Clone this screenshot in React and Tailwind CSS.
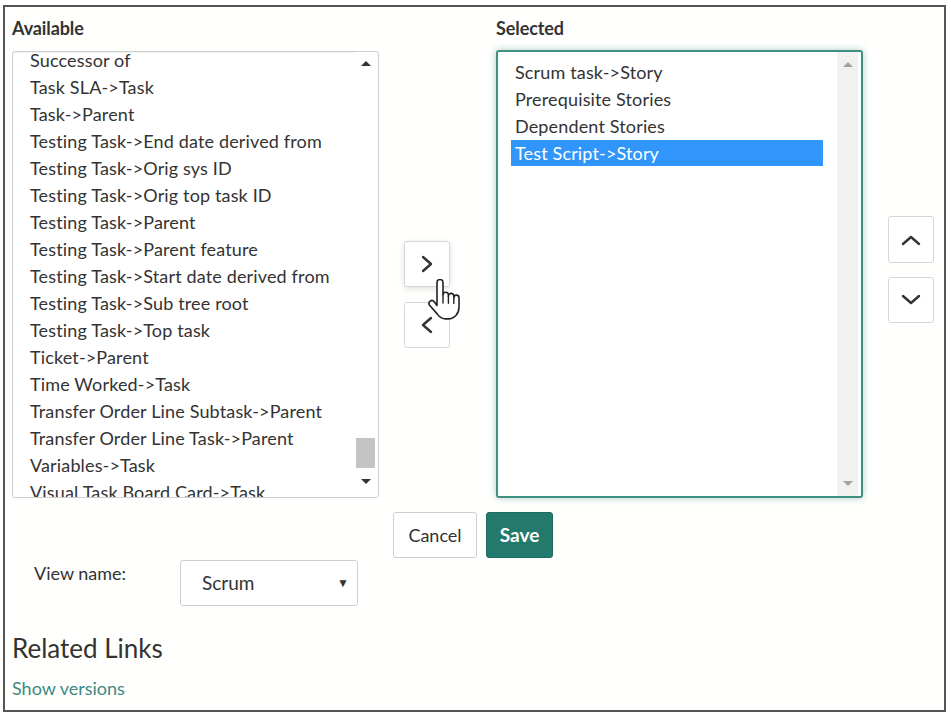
import React from 'react';

const available = [
  'Successor of',
  'Task SLA->Task',
  'Task->Parent',
  'Testing Task->End date derived from',
  'Testing Task->Orig sys ID',
  'Testing Task->Orig top task ID',
  'Testing Task->Parent',
  'Testing Task->Parent feature',
  'Testing Task->Start date derived from',
  'Testing Task->Sub tree root',
  'Testing Task->Top task',
  'Ticket->Parent',
  'Time Worked->Task',
  'Transfer Order Line Subtask->Parent',
  'Transfer Order Line Task->Parent',
  'Variables->Task',
  'Visual Task Board Card->Task',
];

const selected = ['Scrum task->Story', 'Prerequisite Stories', 'Dependent Stories', 'Test Script->Story'];

function HandCursor() {
  return (
    <svg className="absolute left-[423px] top-[272px]" width="36" height="42" viewBox="0 0 36 42">
      <path
        d="M9 3.5c0-1.7 1.3-3 3-3s3 1.3 3 3v12.5c0-1.6 1.2-2.8 2.7-2.8s2.7 1.2 2.7 2.8v1.2c0-1.6 1.2-2.8 2.7-2.8s2.7 1.2 2.7 2.8v1.5c0-1.5 1.2-2.6 2.6-2.6s2.6 1.2 2.6 2.6v9.6c0 6.5-4.6 11.6-10.8 11.6h-2.4c-3.6 0-6.4-1.8-8.4-4.8L1.6 26.3c-1-1.5-.7-3.3.6-4.2 1.3-.9 3-.6 4 .7L9 26.4z"
        fill="white"
        stroke="#222"
        strokeWidth="1.6"
        strokeLinejoin="round"
      />
      <path d="M15 16v8M20.4 17.2v7M25.8 18.7v5.8" stroke="#222" strokeWidth="1.4" strokeLinecap="round" />
    </svg>
  );
}

function Chevron({ dir }) {
  const paths = {
    right: 'M2 2l8 7-8 7',
    left: 'M10 2l-8 7 8 7',
    up: 'M2 10l8-7 8 7',
    down: 'M2 2l8 7 8-7',
  };
  const horiz = dir === 'right' || dir === 'left';
  return (
    <svg width={horiz ? 12 : 20} height={horiz ? 18 : 12} viewBox={horiz ? '0 0 12 18' : '0 0 20 12'} fill="none">
      <path d={paths[dir]} stroke="#333" strokeWidth="2.4" strokeLinecap="round" strokeLinejoin="round" />
    </svg>
  );
}

function ArrowButton({ children, className = '' }) {
  return (
    <button className={`w-[46px] h-[46px] flex items-center justify-center bg-white border border-[#d6d6d6] rounded-[3px] ${className}`}>
      {children}
    </button>
  );
}

export default function App() {
  return (
    <div className="w-[951px] h-[718px] bg-white pt-[5px] pl-[3px]" style={{ fontFamily: 'Lato, "Open Sans", sans-serif' }}>
      <div className="relative w-[943px] h-[707px] border-2 border-[#555] bg-[#fffffd] pl-[7px] pt-[9px] text-[#333]">
        <div className="flex">
          {/* Available */}
          <div className="w-[367px]">
            <div className="h-[24px] leading-[24px] text-[18px] font-bold tracking-[-0.1px]">Available</div>
            <div className="mt-[11px] h-[447px] border border-[#cfcfcf] rounded-[3px] bg-white flex overflow-hidden shadow-[inset_0_1px_1px_rgba(0,0,0,0.06)]">
              <div className="flex-1 overflow-hidden">
                <ul className="-mt-[5px] pl-[17px]">
                  {available.map((t) => (
                    <li key={t} className="h-[27px] leading-[27px] text-[18px] tracking-[0.15px] whitespace-nowrap">{t}</li>
                  ))}
                </ul>
              </div>
              <div className="w-[23px] mr-[1px] flex flex-col items-center bg-white">
                <div className="mt-[9px] w-0 h-0 border-l-[5px] border-r-[5px] border-b-[5px] border-l-transparent border-r-transparent border-b-[#333]" />
                <div className="mt-[372px] w-[19px] h-[30px] bg-[#c4c4c4]" />
                <div className="mt-[11px] w-0 h-0 border-l-[5px] border-r-[5px] border-t-[5px] border-l-transparent border-r-transparent border-t-[#333]" />
              </div>
            </div>
          </div>

          {/* Move buttons */}
          <div className="ml-[25px] flex flex-col pt-[225px] gap-[15px]">
            <ArrowButton className="shadow-[0_2px_6px_rgba(0,0,0,0.12)]"><Chevron dir="right" /></ArrowButton>
            <ArrowButton><Chevron dir="left" /></ArrowButton>
          </div>

          {/* Selected */}
          <div className="ml-[46px] w-[367px]">
            <div className="h-[24px] leading-[24px] text-[18px] font-bold tracking-[-0.1px]">Selected</div>
            <div className="mt-[10px] h-[448px] border-2 border-[#3f8f82] rounded-[3px] bg-white flex overflow-hidden shadow-[0_0_7px_rgba(63,143,130,0.45)]">
              <div className="flex-1 pt-[7px] pl-[13px]">
                <ul className="w-[312px]">
                  {selected.map((t, i) => (
                    <li
                      key={t}
                      className={`text-[18px] tracking-[0.15px] pl-[4px] whitespace-nowrap ${i === 3 ? 'bg-[#3196fb] text-white h-[26px] leading-[26px]' : 'h-[27px] leading-[27px]'}`}
                    >
                      {t}
                    </li>
                  ))}
                </ul>
              </div>
              <div className="w-[21px] mr-[3px] bg-[#f1f1f1] flex flex-col items-center justify-between py-[10px]">
                <div className="w-0 h-0 border-l-[5px] border-r-[5px] border-b-[5px] border-l-transparent border-r-transparent border-b-[#a3a3a3]" />
                <div className="w-0 h-0 border-l-[5px] border-r-[5px] border-t-[5px] border-l-transparent border-r-transparent border-t-[#a3a3a3]" />
              </div>
            </div>
          </div>

          {/* Order buttons */}
          <div className="ml-[25px] flex flex-col pt-[200px] gap-[14px]">
            <ArrowButton className="h-[47px]"><Chevron dir="up" /></ArrowButton>
            <ArrowButton><Chevron dir="down" /></ArrowButton>
          </div>
        </div>

        {/* Cancel / Save */}
        <div className="mt-[14px] flex justify-center gap-[9px] pr-[10px]">
          <button className="w-[84px] h-[46px] bg-white border border-[#cfcfcf] rounded-[3px] text-[18px]">Cancel</button>
          <button className="w-[67px] h-[46px] bg-[#23796b] border border-[#1d6a5e] rounded-[3px] text-[19px] font-bold text-white">Save</button>
        </div>

        {/* View name */}
        <div className="mt-[2px] flex items-start">
          <div className="ml-[22px] pt-[2px] w-[146px] text-[18px] leading-[22px]">View name:</div>
          <div className="w-[178px] h-[46px] border border-[#cfcfcf] rounded-[3px] bg-white flex items-center pl-[21px] pr-[8px] text-[19px]">
            <span className="flex-1">Scrum</span>
            <span className="text-[12px]">▼</span>
          </div>
        </div>

        {/* Related links */}
        <div className="mt-[27px] text-[26px] leading-[30px]">Related Links</div>
        <div className="mt-[14px] text-[18px] leading-[22px] text-[#3c8a82]">Show versions</div>

        <HandCursor />
      </div>
    </div>
  );
}
